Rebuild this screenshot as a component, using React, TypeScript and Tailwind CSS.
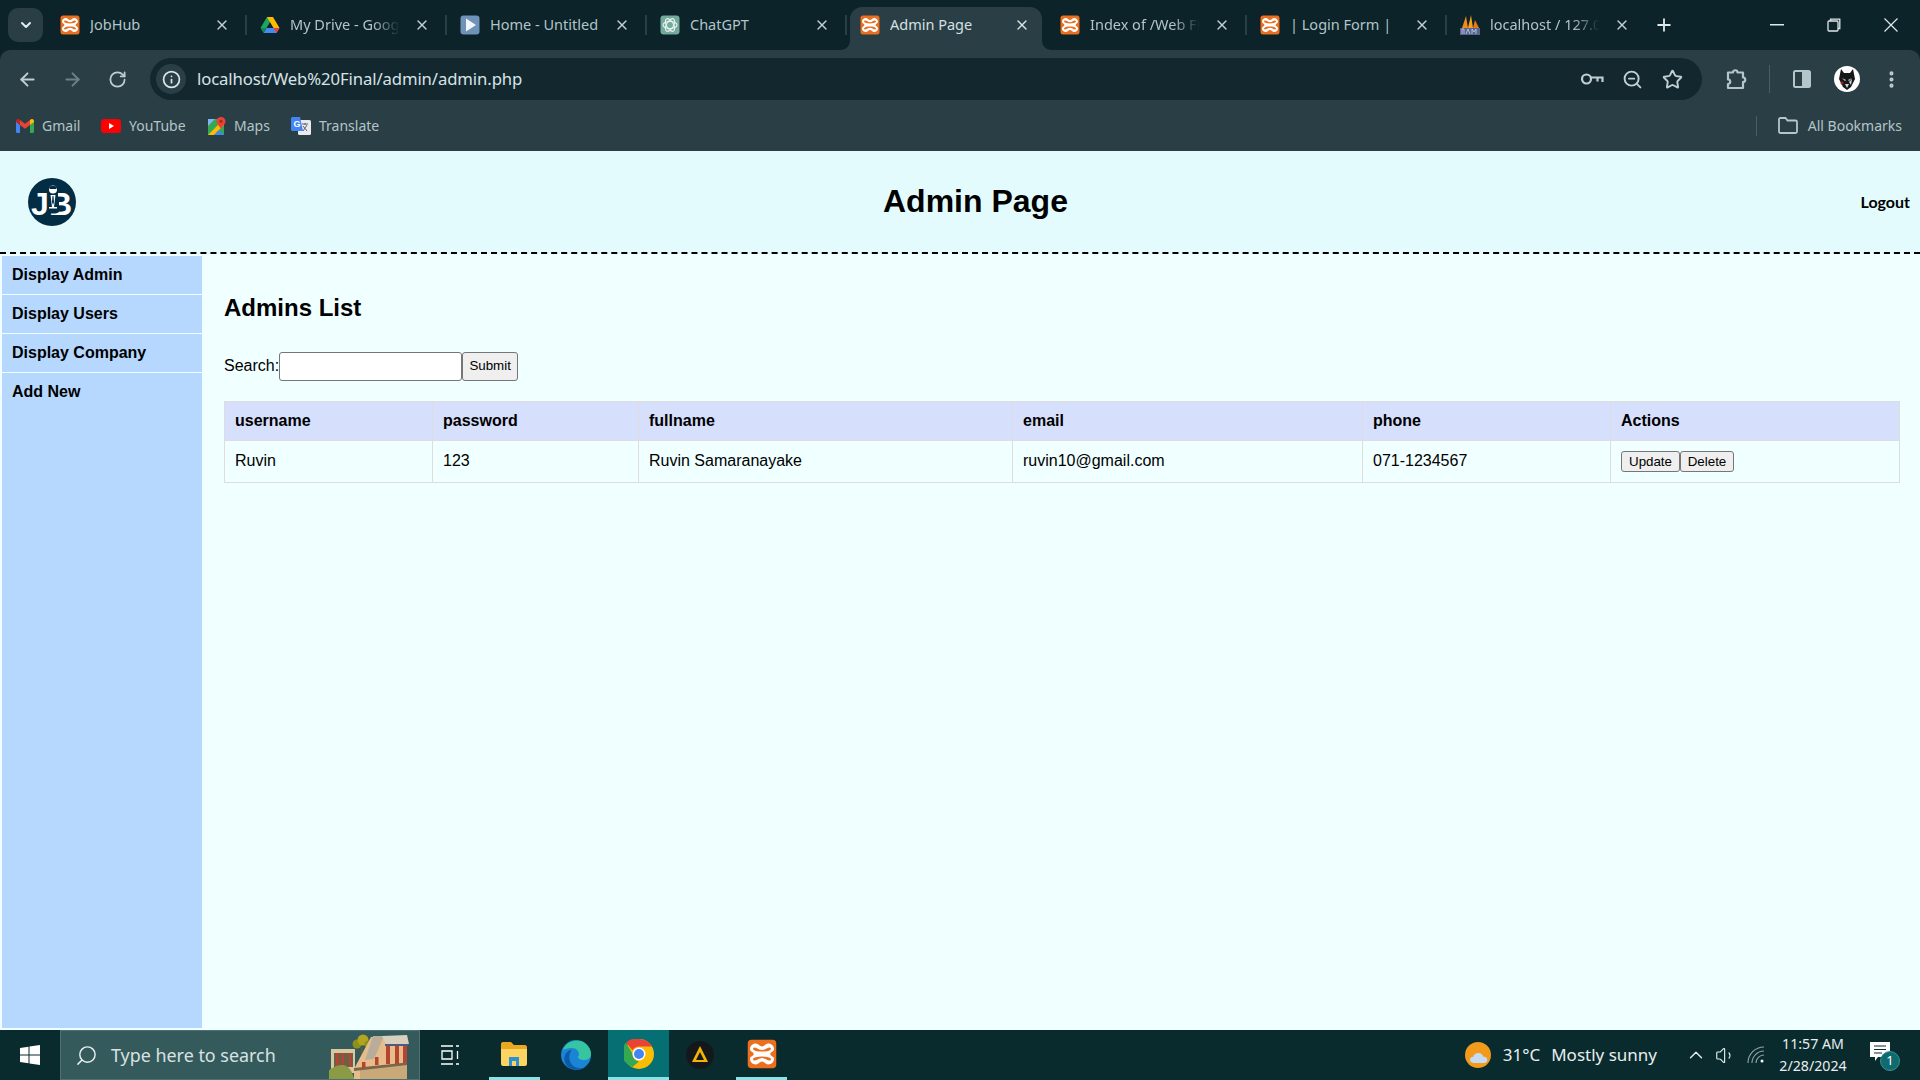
import { ArrowLeft, ArrowRight, ChevronDown, ChevronUp, Info, MoreVertical, Plus, RotateCw, Search, Star, Volume1, X, ZoomOut } from "lucide-react";

const Xampp = ({ size = 20 }: { size?: number }) => (
    <svg width={size} height={size} viewBox="0 0 20 20" className="shrink-0">
        <rect x="0.500" y="0.500" width="19" height="19" rx="2.500" fill="#ea6f1f" />
        <path d="M6 3C7.500 3 8.500 5 10 5C11.500 5 12.500 3 14 3C16.500 3 18 4.800 18 6.800C18 8.300 15.500 8.800 15.500 10C15.500 11.200 18 11.700 18 13.200C18 15.200 16.500 17 14 17C12.500 17 11.500 15 10 15C8.500 15 7.500 17 6 17C3.500 17 2 15.200 2 13.200C2 11.700 4.500 11.200 4.500 10C4.500 8.800 2 8.300 2 6.800C2 4.800 3.500 3 6 3z" fill="#fff" />
        <path d="M5 5.600C6.500 5.600 8 7.300 10 7.300C12 7.300 13.500 5.600 15 5.600C16 5.600 16.300 6.800 15.500 7.300C14.500 7.900 13 8.400 10 8.400C7 8.400 5.500 7.900 4.500 7.300C3.700 6.800 4 5.600 5 5.600z" fill="#ea6f1f" />
        <path d="M5 14.400C6.500 14.400 8 12.700 10 12.700C12 12.700 13.500 14.400 15 14.400C16 14.400 16.300 13.200 15.500 12.700C14.500 12.100 13 11.600 10 11.600C7 11.600 5.500 12.100 4.500 12.700C3.700 13.200 4 14.400 5 14.400z" fill="#ea6f1f" />
    </svg>
);

const Drive = () => (
    <svg width="20" height="20" viewBox="0 0 20 20" className="shrink-0">
        <path d="M7 2h6l-6.500 11H0.500z" fill="#1ea362" />
        <path d="M13 2l6.500 11h-6L7 2z" fill="#ffba00" />
        <path d="M3.500 18l3-5h13l-3 5z" fill="#4688f4" />
        <path d="M0.500 13h6l-3 5z" fill="#0f8a50" />
        <path d="M13.500 13h6l-3 5z" fill="#e64335" />
    </svg>
);

const PlayFav = () => (
    <svg width="20" height="20" viewBox="0 0 20 20" className="shrink-0">
        <rect x="0.500" y="0.500" width="19" height="19" rx="3" fill="#6f93b8" />
        <path d="M6 3.500l10 6.500-10 6.500z" fill="#f2f6fa" />
    </svg>
);

const ChatFav = () => (
    <svg width="20" height="20" viewBox="0 0 20 20" className="shrink-0">
        <rect x="0.500" y="0.500" width="19" height="19" rx="3" fill="#74aa9c" />
        <g fill="none" stroke="#e8f3f0" strokeWidth="1.100">
            <ellipse cx="10" cy="10" rx="7" ry="3.500" />
            <ellipse cx="10" cy="10" rx="7" ry="3.500" transform="rotate(60 10 10)" />
            <ellipse cx="10" cy="10" rx="7" ry="3.500" transform="rotate(120 10 10)" />
        </g>
    </svg>
);

const PmaFav = () => (
    <svg width="20" height="20" viewBox="0 0 20 20" className="shrink-0">
        <path d="M2 13L6 1l2 12z" fill="#f08a1d" />
        <path d="M8 13l3-13 2 13z" fill="#f6a11f" />
        <path d="M13 13l2-8 4 8z" fill="#e9781a" />
        <rect x="0" y="13" width="20" height="7" fill="#59648f" />
        <path d="M2 19v-5h2v5M6 19l2-5 2 5M12 19v-5l2 3 2-3v5" stroke="#c9d0e6" strokeWidth="0.800" fill="none" />
    </svg>
);

interface TabItem {
    title: string,
    icon: React.ReactNode,
    fade?: boolean,
    active?: boolean
}

const tabs: TabItem[] = [
    { title: "JobHub", icon: <Xampp /> },
    { title: "My Drive - Google Drive", icon: <Drive />, fade: true },
    { title: "Home - Untitled", icon: <PlayFav /> },
    { title: "ChatGPT", icon: <ChatFav /> },
    { title: "Admin Page", icon: <Xampp />, active: true },
    { title: "Index of /Web Final", icon: <Xampp />, fade: true },
    { title: "| Login Form |", icon: <Xampp /> },
    { title: "localhost / 127.0.0.1", icon: <PmaFav />, fade: true },
];

const Tab = ({ tab, last }: { tab: TabItem, last: boolean }) => (
    <div className="relative flex h-full w-[200px] shrink-0 items-center pl-[10px]">
        {tab.active && (
            <>
                <div className="absolute left-[0px] right-[8px] top-[7px] bottom-0 rounded-t-[12px] bg-[#2a3f45]" />
                <svg width="10" height="10" viewBox="0 0 10 10" className="absolute bottom-0 left-[-10px]"><path d="M10 0v10H0c6 0 10-4 10-10z" fill="#2a3f45" /></svg>
                <svg width="10" height="10" viewBox="0 0 10 10" className="absolute bottom-0 right-[-2px]"><path d="M0 0v10H10C4 10 0 6 0 0z" fill="#2a3f45" /></svg>
            </>
        )}
        <div className="relative flex w-full items-center">
            {tab.icon}
            <span className={`ml-[10px] w-[72px] flex-1 overflow-hidden whitespace-nowrap text-[14.500px] ${tab.active ? "text-[#d5e0e3]" : "text-[#b4c4c8]"} ${tab.fade ? "[mask-image:linear-gradient(to_right,black_68%,transparent_90%)]" : ""}`}>{tab.title}</span>
            <X size={16} strokeWidth={2} className={`mr-[20px] ml-[2px] shrink-0 ${tab.active ? "text-[#dbe5e8]" : "text-[#c3d1d5]"}`} />
        </div>
        {!tab.active && !last && <div className="absolute right-[3px] top-[15px] h-[20px] w-[2px] bg-[#2a3f45]" />}
    </div>
);

const GmailIcon = () => (
    <svg width="18" height="14" viewBox="0 0 18 14">
        <path d="M0 2v10.500c0 .8.6 1.500 1.500 1.500H4V6z" fill="#4285f4" />
        <path d="M18 2v10.500c0 .8-.6 1.500-1.500 1.500H14V6z" fill="#34a853" />
        <path d="M4 6l5 3.700L14 6V1l-5 3.700L4 1z" fill="#ea4335" />
        <path d="M0 2c0-1.700 2-2.600 3.300-1.600L4 1v5L0 3z" fill="#c5221f" />
        <path d="M18 2c0-1.700-2-2.600-3.300-1.600L14 1v5l4-3z" fill="#fbbc04" />
    </svg>
);

const YoutubeIcon = () => (
    <svg width="20" height="14" viewBox="0 0 20 14">
        <rect width="20" height="14" rx="3.500" fill="#f00" />
        <path d="M8 4l5 3-5 3z" fill="#fff" />
    </svg>
);

const MapsIcon = () => (
    <svg width="18" height="18" viewBox="0 0 18 18">
        <rect y="2" width="16" height="16" fill="#34a853" />
        <path d="M0 18L16 2v6L6 18z" fill="#fbbc04" />
        <path d="M6 18l5-5 5 5z" fill="#4285f4" />
        <path d="M0 2h7L0 9z" fill="#7fb4f5" />
        <path d="M13 0c2.500 0 4.500 1.800 4.500 4.200C17.500 7 14.500 9 13 12c-1.500-3-4.500-5-4.500-7.800C8.500 1.800 10.500 0 13 0z" fill="#ea4335" />
        <circle cx="13" cy="4.200" r="1.500" fill="#a52714" />
    </svg>
);

const TranslateIcon = () => (
    <svg width="20" height="20" viewBox="0 0 20 20">
        <rect x="7" y="4" width="13" height="15" rx="1.500" fill="#e8eaed" />
        <path d="M11 8h6M14 7v2M12 15l4-6M12 10l4 5" stroke="#5f6368" strokeWidth="1" fill="none" />
        <path d="M1.500 1H9l3 14H1.500C.7 15 0 14.300 0 13.500v-11C0 1.700.7 1 1.500 1z" fill="#4285f4" />
        <text x="2.500" y="11" fontSize="9" fontWeight="700" fill="#fff" fontFamily="Liberation Sans, sans-serif">G</text>
    </svg>
);

const bookmarks = [
    { name: "Gmail", icon: <GmailIcon />, width: "w-[85px]" },
    { name: "YouTube", icon: <YoutubeIcon />, width: "w-[107px]" },
    { name: "Maps", icon: <MapsIcon />, width: "w-[83px]" },
    { name: "Translate", icon: <TranslateIcon />, width: "w-[100px]" },
];

const BrowserChrome = () => (
    <div className="bg-[#0b2329] font-['Noto_Sans',sans-serif]">
        <div className="flex h-[50px] items-center">
            <div className="ml-[8px] mr-[2px] flex h-[34px] w-[35px] shrink-0 items-center justify-center rounded-[10px] bg-[#2a3f45]">
                <ChevronDown size={16} strokeWidth={3} className="text-[#e3ecee]" />
            </div>
            <div className="ml-[5px] flex h-full items-stretch">
                {tabs.map((tab, i) => <Tab key={i} tab={tab} last={i === tabs.length - 1} />)}
            </div>
            <Plus size={20} strokeWidth={2.200} className="ml-[4px] text-[#dfe8ea]" />
            <div className="ml-auto flex h-full items-center text-[#dfe8ea]">
                <svg width="14" height="2" className="mr-[43px]"><rect width="14" height="1.500" fill="#dfe8ea" /></svg>
                <svg width="14" height="14" viewBox="0 0 14 14" className="mr-[43px]" fill="none" stroke="#dfe8ea" strokeWidth="1.300"><rect x="1" y="3" width="10" height="10" rx="1" /><path d="M3.500 3V1.200h9.300v9.300H11" /></svg>
                <svg width="14" height="14" viewBox="0 0 14 14" className="mr-[22px]" stroke="#dfe8ea" strokeWidth="1.200"><path d="M0.500 0.500l13 13M13.500 0.500l-13 13" /></svg>
            </div>
        </div>
        <div className="flex h-[50px] items-center rounded-t-[10px] bg-[#2a3f45] pt-[8px] text-[#c0ced2]">
            <ArrowLeft size={21} strokeWidth={2.200} className="ml-[17px]" />
            <ArrowRight size={21} strokeWidth={2.200} className="ml-[24px] text-[#6d8187]" />
            <RotateCw size={19} strokeWidth={2.200} className="ml-[25px]" />
            <div className="ml-[23px] flex h-[42px] w-[1552px] items-center rounded-full bg-[#12282e]">
                <div className="ml-[6px] flex h-[30px] w-[30px] items-center justify-center rounded-full bg-[#2a3f45]">
                    <Info size={19} strokeWidth={2.200} className="text-[#dbe5e8]" />
                </div>
                <span className="ml-[11px] text-[16.700px] tracking-[-0.1px] text-[#d8e3e6]">localhost/Web%20Final/admin/admin.php</span>
                <div className="ml-auto flex items-center">
                    <svg width="24" height="16" viewBox="0 0 24 16" fill="none" stroke="#c0ced2" strokeWidth="2.200" className="mr-[18px]"><circle cx="6.500" cy="8" r="4.500" /><path d="M11 6.500h11.500V11M17.500 7v3.500" /></svg>
                    <ZoomOut size={21} strokeWidth={2.200} className="mr-[19px]" />
                    <Star size={21} strokeWidth={2.200} className="mr-[19px]" />
                </div>
            </div>
            <svg width="21" height="22" viewBox="0 0 21 22" fill="none" stroke="#b5c6ca" strokeWidth="2.200" className="ml-[24px]"><path d="M2 4.500h5c0-3 4.500-3 4.500 0h5.500v5c3 0 3 4.500 0 4.500v6H2v-4c3 0 3-4.500 0-4.500z" strokeLinejoin="round" /></svg>
            <div className="ml-[22px] h-[28px] w-[1px] bg-[#4a5f65]" />
            <svg width="18" height="18" viewBox="0 0 18 18" className="ml-[23px]"><rect x="0" y="0" width="18" height="18" rx="2.500" fill="#b5c6ca" /><rect x="2" y="2" width="7" height="14" fill="#2a3f45" /></svg>
            <svg width="26" height="26" viewBox="0 0 26 26" className="ml-[23px]">
                <circle cx="13" cy="13" r="13" fill="#fff" />
                <path d="M7 3l3 4h6l3-4 2 10-4 8-4 3-4-3-4-8z" fill="#16181a" />
                <path d="M8 12l4 2-1 1zM18 12l-4 2 1 1zM11 18h4l-2 4zM15 16l3-3-1 6z" fill="#cfd4d6" />
                <circle cx="8" cy="17" r="1.500" fill="#a11f1f" />
            </svg>
            <MoreVertical size={21} strokeWidth={2.600} className="ml-[21px]" />
        </div>
        <div className="flex h-[51px] items-center bg-[#2a3f45] pl-[16px] text-[14px] text-[#b4c4c8]">
            {bookmarks.map(b => (
                <div key={b.name} className={`flex items-center gap-[8px] ${b.width}`}>
                    {b.icon}
                    <span>{b.name}</span>
                </div>
            ))}
            <div className="ml-auto h-[20px] w-[1px] bg-[#4a5f65]" />
            <svg width="20" height="17" viewBox="0 0 20 17" fill="none" stroke="#b5c6ca" strokeWidth="1.800" className="ml-[21px]"><path d="M1 2.500C1 1.600 1.600 1 2.500 1h5l2 2.500h8c.9 0 1.500.6 1.500 1.500v9.500c0 .9-.6 1.500-1.500 1.500h-15C1.600 16 1 15.400 1 14.500z" /></svg>
            <span className="ml-[10px] mr-[18px] whitespace-nowrap">All Bookmarks</span>
        </div>
    </div>
);

const JbLogo = () => (
    <svg width="48" height="48" viewBox="0 0 48 48" className="shrink-0">
        <circle cx="24" cy="24" r="24" fill="#032c45" />
        <text x="3" y="37" fontSize="32" fontWeight="700" fill="#fff" fontFamily="Liberation Sans, sans-serif">J</text>
        <text x="21" y="37" fontSize="32" fontWeight="700" fill="#fff" fontFamily="Liberation Sans, sans-serif">B</text>
        <path d="M20 8h10v10l1 5v11c-3 2-8 2-11 0z" fill="#032c45" />
        <circle cx="25" cy="11.500" r="4" fill="#fff" />
        <path d="M21 10c0-3 8-3 8 0l-1 1h-6z" fill="#032c45" />
        <path d="M22.500 17h5l-1.500 12h-2z" fill="#fff" />
        <path d="M24.500 18h1l.5 6-1 3-1-3z" fill="#032c45" />
        <rect x="21" y="29" width="8" height="1.500" fill="#fff" />
    </svg>
);

const columns = [
    { name: "username", width: "w-[208px]" },
    { name: "password", width: "w-[206px]" },
    { name: "fullname", width: "w-[374px]" },
    { name: "email", width: "w-[350px]" },
    { name: "phone", width: "w-[248px]" },
    { name: "Actions", width: "" },
];

const row = ["Ruvin", "123", "Ruvin Samaranayake", "ruvin10@gmail.com", "071-1234567"];

const sideLinks = ["Display Admin", "Display Users", "Display Company", "Add New"];

const btn = "h-[21px] rounded-[3px] border border-[#767676] bg-[#efefef] text-[13.333px] text-black";

const AdminPage = () => (
    <div className="flex flex-1 flex-col bg-[#f0ffff] font-['Liberation_Sans',sans-serif] text-black">
        <header className="flex h-[103px] shrink-0 items-center border-b-2 border-dashed border-black bg-[#e3fbfd] pl-[28px] pr-[10px]">
            <JbLogo />
            <h1 className="ml-[807px] -translate-y-[1px] text-[32px] font-bold">Admin Page</h1>
            <a className="ml-auto font-['Lato',sans-serif] text-[16px] font-bold">Logout</a>
        </header>
        <div className="mt-[2px] flex h-[772px] pl-[2px]">
            <nav className="w-[200px] shrink-0 bg-[#b6d8ff]">
                {sideLinks.map((link, i) => (
                    <div key={link} className={`h-[39px] px-[10px] text-[16px] font-bold leading-[38px] ${i < sideLinks.length - 1 ? "border-b border-[#f0ffff]" : ""}`}>{link}</div>
                ))}
            </nav>
            <main className="flex-1 pl-[22px] pr-[20px]">
                <h2 className="mt-[38px] text-[24px] font-bold leading-[28px]">Admins List</h2>
                <div className="mt-[29px] flex h-[30px] items-center text-[16px]">
                    <span>Search:</span>
                    <input className="h-[29px] w-[183px] rounded-[3px] border border-[#767676] bg-white" />
                    <button className={`${btn} h-[29px] w-[56px]`}>Submit</button>
                </div>
                <table className="mt-[20px] w-[1676px] table-fixed border-collapse text-[16px]">
                    <thead>
                        <tr className="h-[39px] bg-[#d6dffc]">
                            {columns.map(c => (
                                <th key={c.name} className={`border border-[#dddddd] px-[10px] text-left font-bold ${c.width}`}>{c.name}</th>
                            ))}
                        </tr>
                    </thead>
                    <tbody>
                        <tr className="h-[42px]">
                            {row.map(v => (
                                <td key={v} className="border border-[#dddddd] px-[10px] pb-[2px]">{v}</td>
                            ))}
                            <td className="border border-[#dddddd] px-[10px]">
                                <div className="flex">
                                    <button className={`${btn} w-[59px]`}>Update</button>
                                    <button className={`${btn} w-[54px]`}>Delete</button>
                                </div>
                            </td>
                        </tr>
                    </tbody>
                </table>
            </main>
        </div>
    </div>
);

const FilesIcon = () => (
    <svg width="28" height="26" viewBox="0 0 28 26">
        <path d="M1 3c0-1 .7-2 2-2h8l3 3h11c1 0 2 1 2 2v4H1z" fill="#e9a81f" />
        <path d="M1 8h26v15c0 1-1 2-2 2H3c-1 0-2-1-2-2z" fill="#fcd462" />
        <path d="M9 25v-9h10v9h-3v-5h-4v5z" fill="#2d8fd6" />
    </svg>
);

const EdgeIcon = () => (
    <svg width="30" height="30" viewBox="0 0 30 30">
        <circle cx="15" cy="15" r="15" fill="#1b84d6" />
        <path d="M2 10C5 2 13 0 19 1c6 1 11 7 11 13 0 4-3 6-7 6-3 0-6-1-6-3 0-1 1-1 1-3 0-3-3-6-7-6-4 0-7 1-9 2z" fill="#35c5a0" />
        <path d="M11 29C5 27 2 21 4 15c1-3 4-5 7-5-4 4-4 13 3 17 4 2 9 2 12-1-3 3-9 5-15 3z" fill="#0c5ba8" />
    </svg>
);

const ChromeIcon = () => (
    <svg width="30" height="30" viewBox="0 0 30 30">
        <circle cx="15" cy="15" r="15" fill="#fbbc04" />
        <path d="M15 0a15 15 0 0 1 13 7.500H15a7.500 7.500 0 0 0-6.500 3.750L2 3.500A15 15 0 0 1 15 0z" fill="#ea4335" />
        <path d="M2 3.500l6.500 11.250A7.500 7.500 0 0 0 15 22.500L8.500 28A15 15 0 0 1 2 3.500z" fill="#34a853" />
        <circle cx="15" cy="15" r="6.500" fill="#fff" />
        <circle cx="15" cy="15" r="5" fill="#4285f4" />
    </svg>
);

const VlcLike = () => (
    <svg width="28" height="28" viewBox="0 0 28 28">
        <circle cx="14" cy="14" r="14" fill="#15181a" />
        <path d="M14 5l8 16H6z" fill="#f4b400" />
        <path d="M14 11l4 8h-8z" fill="#15181a" />
    </svg>
);

const SearchArt = () => (
    <svg width="90" height="48" viewBox="0 0 90 48" className="ml-auto shrink-0">
        <rect x="2" y="18" width="24" height="24" fill="#d9c7a0" />
        <rect x="5" y="22" width="19" height="14" fill="#6e5f48" />
        <rect x="7" y="22" width="2.500" height="14" fill="#b5452f" />
        <rect x="12.500" y="22" width="2.500" height="14" fill="#b5452f" />
        <rect x="20" y="22" width="2.500" height="14" fill="#b5452f" />
        <path d="M-7 50C-3 38 8 33 15 34C22 36 24 44 26 50z" fill="#8a9a45" />
        <rect x="32" y="16" width="1.500" height="15" fill="#6b5a2a" />
        <circle cx="28" cy="13" r="4.500" fill="#8f8f1e" />
        <circle cx="34" cy="9" r="5.500" fill="#b3a61f" />
        <circle cx="39" cy="13" r="3.500" fill="#8f8f1e" />
        <path d="M25 38L42 6h36v44H25z" fill="#e6bd8a" />
        <path d="M36 29L44 5h11L45 28z" fill="#b8ad9a" />
        <path d="M53 5l25-1 2 9H57z" fill="#d8d0bc" />
        <rect x="57" y="13" width="4" height="20" fill="#b5452f" />
        <rect x="66" y="13" width="4" height="20" fill="#b5452f" />
        <rect x="74" y="13" width="4" height="19" fill="#b5452f" />
        <rect x="56" y="13" width="23" height="2" fill="#4f5a80" />
        <path d="M31 39l47-7v16H31z" fill="#c9a87a" />
        <path d="M25 37l53-5.500v2.500L25 40z" fill="#7c6448" />
        <rect x="33" y="31" width="3.500" height="6" fill="#b5452f" />
        <rect x="46" y="26" width="3.500" height="8" fill="#b5452f" />
    </svg>
);

const Taskbar = () => (
    <footer className="flex h-[50px] shrink-0 items-center bg-[#0a2b2e] font-['Noto_Sans',sans-serif] text-[#e8eeee]">
        <div className="flex h-full w-[60px] items-center justify-center">
            <svg width="20" height="20" viewBox="0 0 20 20" fill="#fff"><path d="M0 3l8.500-1.200v7.700H0zM9.500 1.600L20 0v9.500H9.500zM0 10.500h8.500v7.700L0 17zM9.500 10.500H20V20L9.500 18.400z" /></svg>
        </div>
        <div className="flex h-full w-[360px] items-center overflow-hidden border border-[#4d7072] bg-[#355a5c] pl-[14px]">
            <Search size={23} strokeWidth={1.500} className="-scale-x-100" />
            <span className="ml-[13px] text-[17.900px] text-[#d8e2e2]">Type here to search</span>
            <SearchArt />
        </div>
        <div className="flex h-full w-[60px] items-center justify-center">
            <svg width="20" height="20" viewBox="0 0 20 20" fill="none" stroke="#fff" strokeWidth="1.300"><path d="M1 1h12M1 19h12M2 6h10v8H2zM16 1h3M16 19h3M17.500 6v8" /></svg>
        </div>
        <div className="flex h-full w-[68px] items-center justify-center"><div className="flex h-full w-[51px] flex-col items-center justify-center border-b-[3px] border-[#8be3e8]"><FilesIcon /></div></div>
        <div className="flex h-full w-[56px] items-center justify-center"><EdgeIcon /></div>
        <div className="ml-[4px] flex h-full w-[61px] items-center justify-center border-b-[3px] border-[#8be3e8] bg-[#056f73]"><ChromeIcon /></div>
        <div className="flex h-full w-[62px] items-center justify-center"><VlcLike /></div>
        <div className="flex h-full w-[61px] items-center justify-center"><div className="flex h-full w-[51px] items-center justify-center border-b-[3px] border-[#8be3e8]"><Xampp size={30} /></div></div>
        <div className="ml-auto flex h-full items-center">
            <svg width="28" height="26" viewBox="0 0 28 26">
                <circle cx="13" cy="13" r="13" fill="#f19a1c" />
                <path d="M9 21c-2.500 0-4-1.500-4-3.300 0-1.700 1.500-3 3.300-3 .6-2.500 2.500-3.700 5-3.700 2.700 0 4.500 1.700 5 3.700 2-.3 4 .8 4 3 0 2.200-1.500 3.300-3.500 3.300z" fill="#c6dcf4" />
            </svg>
            <span className="ml-[10px] text-[17px]">31°C</span>
            <span className="ml-[11px] text-[17px]">Mostly sunny</span>
            <ChevronUp size={22} strokeWidth={1.500} className="ml-[28px]" />
            <Volume1 size={21} strokeWidth={1.300} className="ml-[8px]" />
            <svg width="18" height="18" viewBox="0 0 18 18" fill="none" stroke="#93a5a6" strokeWidth="1.100" className="ml-[11px]"><path d="M1 17A16 16 0 0 1 17 1M5 17A12 12 0 0 1 17 5M9 17a8 8 0 0 1 8-8" /><circle cx="15" cy="15" r="1.500" fill="#fff" stroke="none" /></svg>
            <div className="ml-[12px] flex w-[72px] flex-col items-center text-[14.200px] leading-[22px]">
                <span>11:57 AM</span>
                <span>2/28/2024</span>
            </div>
            <div className="relative ml-[21px] mr-[30px] h-[26px] w-[20px]">
                <svg width="20" height="20" viewBox="0 0 20 20" fill="#fff"><path d="M0 0h20v15H8l-3 4v-4H0z" /><path d="M4 4h12M4 7.500h12M4 11h8" stroke="#0a2b2e" strokeWidth="1" /></svg>
                <span className="absolute left-[10px] top-[9px] flex h-[20px] w-[20px] items-center justify-center rounded-full border border-[#3d8f92] bg-[#0f6b70] text-[13px] text-white">1</span>
            </div>
        </div>
    </footer>
);

export default function App() {
    return (
        <div className="flex h-[1080px] w-[1920px] flex-col overflow-hidden bg-[#f0ffff]">
            <BrowserChrome />
            <AdminPage />
            <Taskbar />
        </div>
    );
}
